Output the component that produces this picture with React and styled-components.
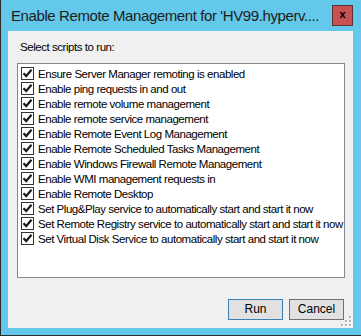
import styled, { createGlobalStyle } from "styled-components";

const GlobalStyle = createGlobalStyle`
  html, body {
    margin: 0;
    padding: 0;
    background: #ffffff;
  }
  * {
    box-sizing: border-box;
  }
`;

const scripts = [
  "Ensure Server Manager remoting is enabled",
  "Enable ping requests in and out",
  "Enable remote volume management",
  "Enable remote service management",
  "Enable Remote Event Log Management",
  "Enable Remote Scheduled Tasks Management",
  "Enable Windows Firewall Remote Management",
  "Enable WMI management requests in",
  "Enable Remote Desktop",
  "Set Plug&Play service to automatically start and start it now",
  "Set Remote Registry service to automatically start and start it now",
  "Set Virtual Disk Service to automatically start and start it now",
];

function CheckMark() {
  return (
    <svg width="11" height="11" viewBox="0 0 11 11">
      <path d="M1.5 5.2 L4.2 8 L9.5 1.8" fill="none" stroke="#1a1a1a" strokeWidth="2.2" />
    </svg>
  );
}

function Grip() {
  const dots = [[8, 0], [4, 4], [8, 4], [0, 8], [4, 8], [8, 8]];
  return (
    <GripBox width="11" height="11" viewBox="0 0 11 11">
      {dots.map(([x, y], i) => (
        <g key={i}>
          <rect x={x + 1} y={y + 1} width="2" height="2" fill="#ffffff" />
          <rect x={x} y={y} width="2" height="2" fill="#b8b8b8" />
        </g>
      ))}
    </GripBox>
  );
}

export default function App() {
  return (
    <>
      <GlobalStyle />
      <Window>
        <TitleBar>
          <Title>Enable Remote Management for 'HV99.hyperv....</Title>
          <CloseButton>x</CloseButton>
        </TitleBar>
        <Client>
          <Label>Select scripts to run:</Label>
          <ListBox>
            {scripts.map((s) => (
              <Row key={s}>
                <CheckBox>
                  <CheckMark />
                </CheckBox>
                <RowText>{s}</RowText>
              </Row>
            ))}
          </ListBox>
          <Buttons>
            <Button $default>Run</Button>
            <Button>Cancel</Button>
          </Buttons>
          <Grip />
        </Client>
      </Window>
    </>
  );
}

const Window = styled.div`
  width: 361px;
  height: 336px;
  background: #63c8e9;
  border-left: 1px solid #2b2b2b;
  border-bottom: 1px solid #2b2b2b;
  padding: 0 8px 7px 7px;
  display: flex;
  flex-direction: column;
  font-family: "Liberation Sans", Arial, sans-serif;
`;

const TitleBar = styled.div`
  height: 31px;
  display: flex;
  align-items: flex-start;
  justify-content: space-between;
  flex-shrink: 0;
`;

const Title = styled.div`
  margin-top: 7px;
  padding-left: 3px;
  font-size: 15px;
  line-height: 18px;
  letter-spacing: -0.4px;
  color: #1e1e1e;
  white-space: nowrap;
`;

const CloseButton = styled.div`
  margin-top: 5px;
  width: 21px;
  height: 21px;
  background: #c75050;
  border: 1px solid #5f3232;
  color: #000;
  font-size: 11px;
  font-weight: bold;
  line-height: 17px;
  text-align: center;
`;

const Client = styled.div`
  flex: 1;
  background: #f0f0f0;
  position: relative;
  display: flex;
  flex-direction: column;
`;

const Label = styled.div`
  margin: 9px 0 0 12px;
  font-size: 11.5px;
  line-height: 15px;
  letter-spacing: -0.45px;
  color: #000;
`;

const ListBox = styled.div`
  margin: 8px 8px 0 9px;
  height: 215px;
  background: #fff;
  border: 1px solid #828790;
  padding-top: 2px;
`;

const Row = styled.div`
  height: 15px;
  display: flex;
  align-items: center;
  padding-left: 3px;
`;

const CheckBox = styled.div`
  width: 13px;
  height: 13px;
  border: 1px solid #333;
  background: #fff;
  display: flex;
  align-items: center;
  justify-content: center;
  flex-shrink: 0;
`;

const RowText = styled.span`
  margin-left: 4px;
  font-size: 11.5px;
  letter-spacing: -0.46px;
  color: #000;
  white-space: nowrap;
`;

const Buttons = styled.div`
  display: flex;
  justify-content: flex-end;
  gap: 6px;
  margin: 21px 9px 0 0;
`;

const Button = styled.div`
  width: 55px;
  height: 21px;
  background: #e1e1e1;
  border: 1px solid ${(p) => (p.$default ? "#3c7fb1" : "#707070")};
  font-size: 12px;
  line-height: 19px;
  text-align: center;
  color: #000;
`;

const GripBox = styled.svg`
  position: absolute;
  right: 1px;
  bottom: 1px;
`;
